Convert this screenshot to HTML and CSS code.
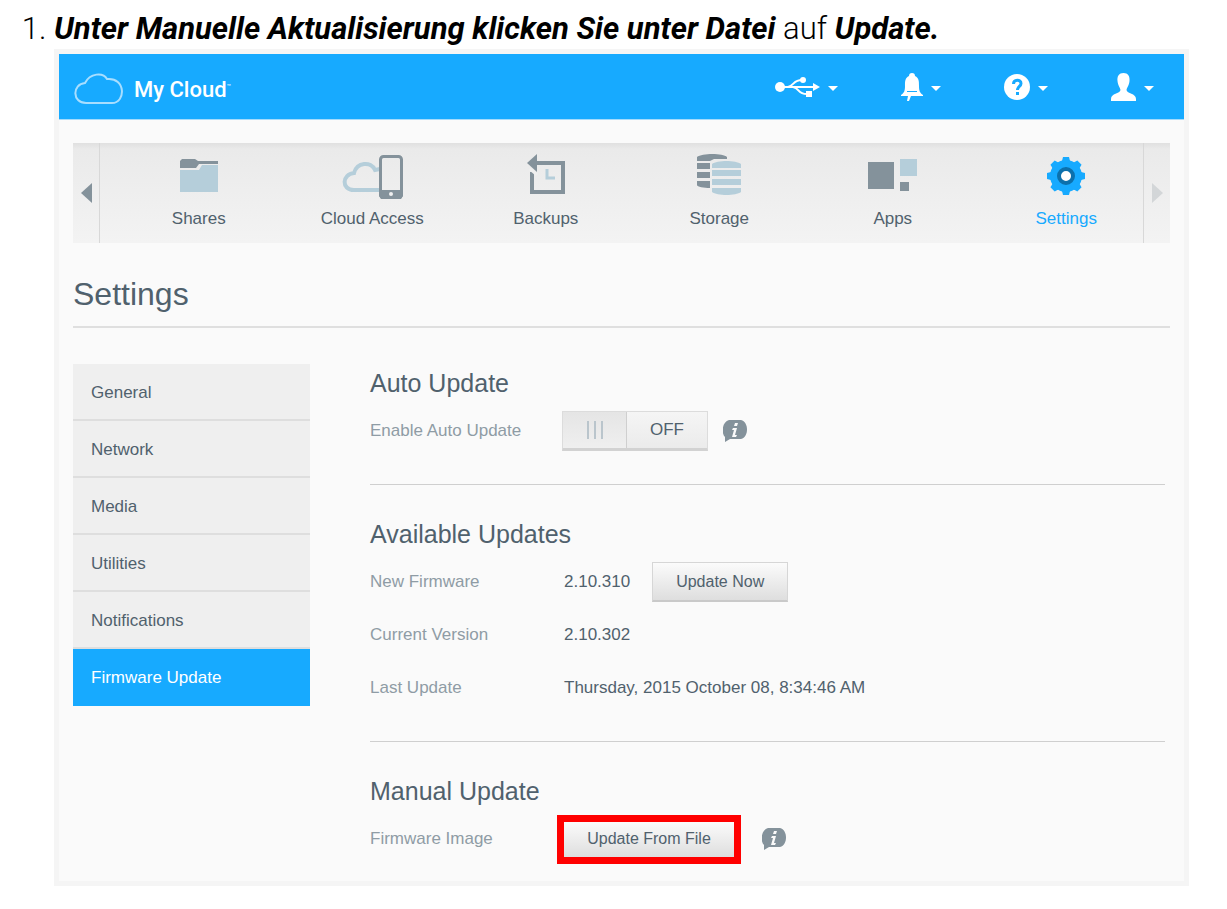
FILE: index.html
```html
<!DOCTYPE html>
<html lang="de">
<head>
    <meta charset="UTF-8">
    <meta name="viewport" content="width=device-width, initial-scale=1.0">
    <title>My Cloud - Firmware Update</title>
    <link rel="stylesheet" href="styles.css">
</head>
<body>
    <ol class="steps">
        <li>
            <p class="step-text"><strong>Unter Manuelle Aktualisierung klicken Sie unter Datei</strong> auf <strong>Update.</strong></p>

            <div class="app" lang="en">
                <header class="topbar">
                    <a href="#" class="logo">
                        <svg width="50" height="32" viewBox="0 0 50 32" fill="none" stroke="#a8deff" stroke-width="2"><path d="M12 30C-2 30-2 11 11 10C16 0 29-1 33 6C52 4 52 30 38 30Z"/></svg>
                        <span>My Cloud<sup>™</sup></span>
                    </a>
                    <div class="tools">
                        <button type="button" class="tool" aria-label="USB">
                            <svg width="45" height="22" viewBox="0 0 45 22" fill="none" stroke="#fff" stroke-width="2"><path d="M5 11H40M13 11C20 9 18 4 27 4M18 11C25 12 22 18 32 18"/><g fill="#fff" stroke="none"><circle cx="5" cy="11" r="5"/><circle cx="28" cy="4" r="3"/><path d="M31 15h6v6h-6zM38 7l7 4-7 4z"/></g></svg>
                            <span class="caret"></span>
                        </button>
                        <button type="button" class="tool" aria-label="Alerts">
                            <svg width="22" height="28" viewBox="0 0 22 28" fill="#fff"><path d="M11 0C13 0 14 1 14 3C18 5 18 8 18 13C18 18 19 20 22 22V23H10L8 28H6L7 23H0V22C3 20 4 18 4 13C4 8 4 5 8 3C8 1 9 0 11 0Z"/><path d="M6 18.500H16" stroke="#17aaff" stroke-width="1"/></svg>
                            <span class="caret"></span>
                        </button>
                        <button type="button" class="tool" aria-label="Help">
                            <svg width="26" height="26" viewBox="0 0 26 26" fill="none"><circle cx="13" cy="13" r="13" fill="#fff"/><path d="M9.500 10C9.500 5 17 5 17 9.500C17 12.500 13.500 12.500 13.500 16" stroke="#17aaff" stroke-width="3"/><path d="M12 18h3v3h-3z" fill="#17aaff"/></svg>
                            <span class="caret"></span>
                        </button>
                        <button type="button" class="tool" aria-label="User">
                            <svg width="25" height="28" viewBox="0 0 25 28" fill="#fff"><path d="M12.500 0C17 0 19 3 18.500 8C18 13 16 14 15.500 17C16 21 25 20 25 26V28H0V26C0 20 9 21 9.500 17C9 14 7 13 6.500 8C6 3 8 0 12.500 0Z"/></svg>
                            <span class="caret"></span>
                        </button>
                    </div>
                </header>

                <nav class="main-nav">
                    <button type="button" class="scroll prev" aria-label="Previous"><svg width="11" height="20" viewBox="0 0 11 20"><path d="M11 0V20L0 10Z"/></svg></button>
                    <ul class="nav-list">
                        <li><a href="#">
                            <svg width="40" height="48" viewBox="0 0 40 48"><path fill="#b5ceda" d="M1 17H20L23 12H39V39H1Z"/><path fill="#84929b" d="M3 6H16L19 8H39V11H20L17 15H1V8Z"/></svg>
                            Shares</a></li>
                        <li><a href="#">
                            <svg width="64" height="48" viewBox="0 0 64 48" fill="none"><path d="M40 37H14C1 37 2 21 14 20C17 9 31 8 35 17L40 16" stroke="#b5ceda" stroke-width="4"/><rect x="40.500" y="3.500" width="21" height="41" rx="3" stroke="#84929b" stroke-width="3"/><path d="M39 37H63V43L61 46H41L39 43Z" fill="#84929b"/><circle cx="51" cy="41" r="2" fill="#f0f0f0"/></svg>
                            Cloud Access</a></li>
                        <li><a href="#">
                            <svg width="40" height="48" viewBox="0 0 40 48"><path fill="none" stroke="#84929b" stroke-width="4" d="M10 10H37V39H6V19"/><path fill="#f0f0f0" d="M3 17L10 23L12 21L5 15Z"/><path fill="#84929b" d="M1 10L11 1V19Z"/><path fill="none" stroke="#b5ceda" stroke-width="3" d="M21 16V25H29"/></svg>
                            Backups</a></li>
                        <li><a href="#">
                            <svg width="46" height="48" viewBox="0 0 46 48"><path fill="#84929b" d="M1 4C6 0 27 0 31 4V6H18L14 8H1ZM1 10H14V16H1ZM1 19H14V25H1ZM1 28H14V35C8 35 1 34 1 32Z"/><path fill="#b5ceda" d="M16 11C21 7 40 7 45 11V15H16ZM16 17H45V23H16ZM16 26H45V32H16ZM16 35H45V39C40 43 21 43 16 39Z"/></svg>
                            Storage</a></li>
                        <li><a href="#">
                            <svg width="50" height="48" viewBox="0 0 50 48"><path fill="#84929b" d="M0 9H26V36H0ZM32 29H41V38H32Z"/><path fill="#b5ceda" d="M32 6H49V23H32Z"/></svg>
                            Apps</a></li>
                        <li><a href="#" class="active">
                            <svg width="40" height="48" viewBox="0 0 40 48"><g fill="#17aaff" transform="translate(20 23)"><circle r="16"/><path id="teeth" d="M-4-15L-3-19H3L4-15V15L3 19H-3L-4 15Z"/><use href="#teeth" transform="rotate(45)"/><use href="#teeth" transform="rotate(90)"/><use href="#teeth" transform="rotate(135)"/></g><circle cx="20" cy="23" r="7" fill="#fff" stroke="#0c70ac" stroke-width="4"/></svg>
                            Settings</a></li>
                    </ul>
                    <button type="button" class="scroll next" aria-label="Next"><svg width="11" height="20" viewBox="0 0 11 20"><path d="M0 0V20L11 10Z"/></svg></button>
                </nav>

                <h1>Settings</h1>

                <div class="content">
                    <ul class="side-menu">
                        <li><a href="#">General</a></li>
                        <li><a href="#">Network</a></li>
                        <li><a href="#">Media</a></li>
                        <li><a href="#">Utilities</a></li>
                        <li><a href="#">Notifications</a></li>
                        <li><a href="#" class="active">Firmware Update</a></li>
                    </ul>

                    <main class="panel">
                        <section>
                            <h2>Auto Update</h2>
                            <div class="row">
                                <label for="autoUpdate">Enable Auto Update</label>
                                <button type="button" id="autoUpdate" class="toggle" role="switch" aria-checked="false">
                                    <span class="knob"><i></i><i></i><i></i></span>
                                    <span class="state">OFF</span>
                                </button>
                                <button type="button" class="info" aria-label="Info">
                                    <svg width="24" height="22" viewBox="0 0 24 22"><path fill="#84929b" d="M6 0H18C26 2 26 17 18 19H7L2 22V17C-2 13-1 2 6 0Z"/><path fill="#fafafa" d="M12 3H15L14 6H11ZM10 8H14L12 15H14L13 17H9L11 10H9Z"/></svg>
                                </button>
                            </div>
                        </section>

                        <section>
                            <h2>Available Updates</h2>
                            <div class="row">
                                <span class="label">New Firmware</span>
                                <span>2.10.310</span>
                                <button type="button" class="btn update-now">Update Now</button>
                            </div>
                            <div class="row">
                                <span class="label">Current Version</span>
                                <span>2.10.302</span>
                            </div>
                            <div class="row">
                                <span class="label">Last Update</span>
                                <span>Thursday, 2015 October 08, 8:34:46 AM</span>
                            </div>
                        </section>

                        <section>
                            <h2>Manual Update</h2>
                            <div class="row">
                                <label for="updateFile">Firmware Image</label>
                                <button type="button" id="updateFile" class="btn highlight">Update From File</button>
                                <button type="button" class="info" aria-label="Info">
                                    <svg width="24" height="22" viewBox="0 0 24 22"><path fill="#84929b" d="M6 0H18C26 2 26 17 18 19H7L2 22V17C-2 13-1 2 6 0Z"/><path fill="#fafafa" d="M12 3H15L14 6H11ZM10 8H14L12 15H14L13 17H9L11 10H9Z"/></svg>
                                </button>
                            </div>
                        </section>
                    </main>
                </div>
            </div>
        </li>
    </ol>
</body>
</html>
```
FILE: styles.css
```css
/* styles.css */
* {
    box-sizing: border-box;
}

body {
    margin: 0;
    background-color: #fff;
    color: #000;
    font-family: Roboto, sans-serif;
}

ul, p, h1, h2 {
    margin: 0;
    padding: 0;
}

ul {
    list-style: none;
}

a {
    color: inherit;
    text-decoration: none;
}

button {
    font: inherit;
    color: inherit;
    border: none;
    background: none;
    padding: 0;
    cursor: pointer;
}

/* Instruction step */
.steps {
    margin: 0;
    padding: 8px 38px 24px 54px;
    font-size: 31px;
    font-weight: 300;
}

.step-text {
    line-height: 41px;
}

.step-text strong {
    font-weight: 700;
    font-style: italic;
}

/* App window */
.app {
    border: 5px solid #f5f5f5;
    background-color: #fafafa;
    color: #50616d;
    font-family: "Liberation Sans", Arial, sans-serif;
    font-size: 17px;
    font-weight: 400;
    line-height: 20px;
}

.topbar {
    display: flex;
    justify-content: space-between;
    align-items: center;
    height: 66px;
    padding: 0 30px 0 15px;
    background-color: #17aaff;
    border-bottom: 1px solid #a4dbfc;
    color: #fff;
}

.logo {
    display: flex;
    align-items: center;
    gap: 10px;
    margin-top: 4px;
    font-family: Roboto, sans-serif;
    font-size: 22px;
    font-weight: 500;
}

.logo sup {
    font-size: 7px;
    font-weight: 400;
}

.tools {
    display: flex;
    gap: 63px;
}

.tool {
    display: flex;
    align-items: center;
    gap: 8px;
    height: 28px;
}

.caret {
    margin-top: 4px;
    border: 5px solid transparent;
    border-top-color: #fff;
    border-bottom: none;
}

/* Main navigation */
.main-nav {
    display: flex;
    height: 100px;
    margin: 23px 14px 0;
    background: linear-gradient(#e0e0e0, #eaeaea 6px, #f3f3f3);
}

.scroll {
    flex: 0 0 27px;
}

.scroll svg {
    display: block;
    margin: 0 auto;
    fill: #84929b;
}

.prev {
    border-right: 1px solid #d8d8d8;
}

.next {
    border-left: 1px solid #d8d8d8;
}

.next svg {
    fill: #d3d6d8;
}

.nav-list {
    flex: 1;
    display: flex;
    padding-left: 12px;
    margin-right: -10px;
}

.nav-list li {
    flex: 1;
}

.nav-list a {
    display: flex;
    flex-direction: column;
    align-items: center;
    padding-top: 10px;
    gap: 8px;
}

.nav-list .active {
    color: #17aaff;
}

h1 {
    margin: 0 14px;
    padding: 32px 0 13px;
    border-bottom: 2px solid #dfdfdf;
    font-size: 32px;
    font-weight: 400;
    line-height: 38px;
}

/* Settings content */
.content {
    display: flex;
    align-items: flex-start;
    gap: 60px;
    padding: 36px 19px 22px 14px;
}

.side-menu {
    flex: 0 0 237px;
    background-color: #efefef;
}

.side-menu a {
    display: block;
    height: 57px;
    padding: 0 18px;
    border-bottom: 2px solid #dedede;
    line-height: 57px;
}

.side-menu .active {
    background-color: #17aaff;
    border-color: #17aaff;
    color: #fff;
}

.panel {
    flex: 1;
    padding-top: 4px;
}

.panel section + section {
    margin-top: 33px;
    padding-top: 34px;
    border-top: 1px solid #cfcfcf;
}

h2 {
    font-size: 25px;
    font-weight: 400;
    line-height: 30px;
    margin-bottom: 13px;
}

.row {
    display: flex;
    align-items: center;
    height: 40px;
}

.row + .row {
    margin-top: 13px;
}

.row label,
.row .label {
    flex: 0 0 194px;
    color: #8f9ca5;
}

.toggle {
    display: flex;
    width: 146px;
    height: 40px;
    margin-left: -2px;
    border: 1px solid #dcdcdc;
    border-bottom: 3px solid #d2d2d2;
    background: linear-gradient(#f5f5f5, #ebebeb);
}

.knob {
    display: flex;
    justify-content: center;
    align-items: center;
    gap: 5px;
    flex: 0 0 64px;
    align-self: stretch;
    border-right: 1px solid #cfcfcf;
    background: linear-gradient(#e5e5e5, #efefef);
}

.knob i {
    width: 2px;
    height: 18px;
    background-color: #bac5cc;
}

.state {
    flex: 1;
    line-height: 36px;
}

.btn {
    height: 40px;
    border: 1px solid #d6d6d6;
    border-bottom: 2px solid #c9c9c9;
    background: linear-gradient(#fbfbfb, #dedede);
    font-size: 16px;
}

.update-now {
    width: 136px;
    margin-left: 22px;
}

.highlight {
    width: 170px;
    height: 35px;
    border: none;
    outline: 7px solid #ff0000;
}

.info {
    display: flex;
    margin-left: 15px;
}

.highlight + .info {
    margin-left: 28px;
}
```
